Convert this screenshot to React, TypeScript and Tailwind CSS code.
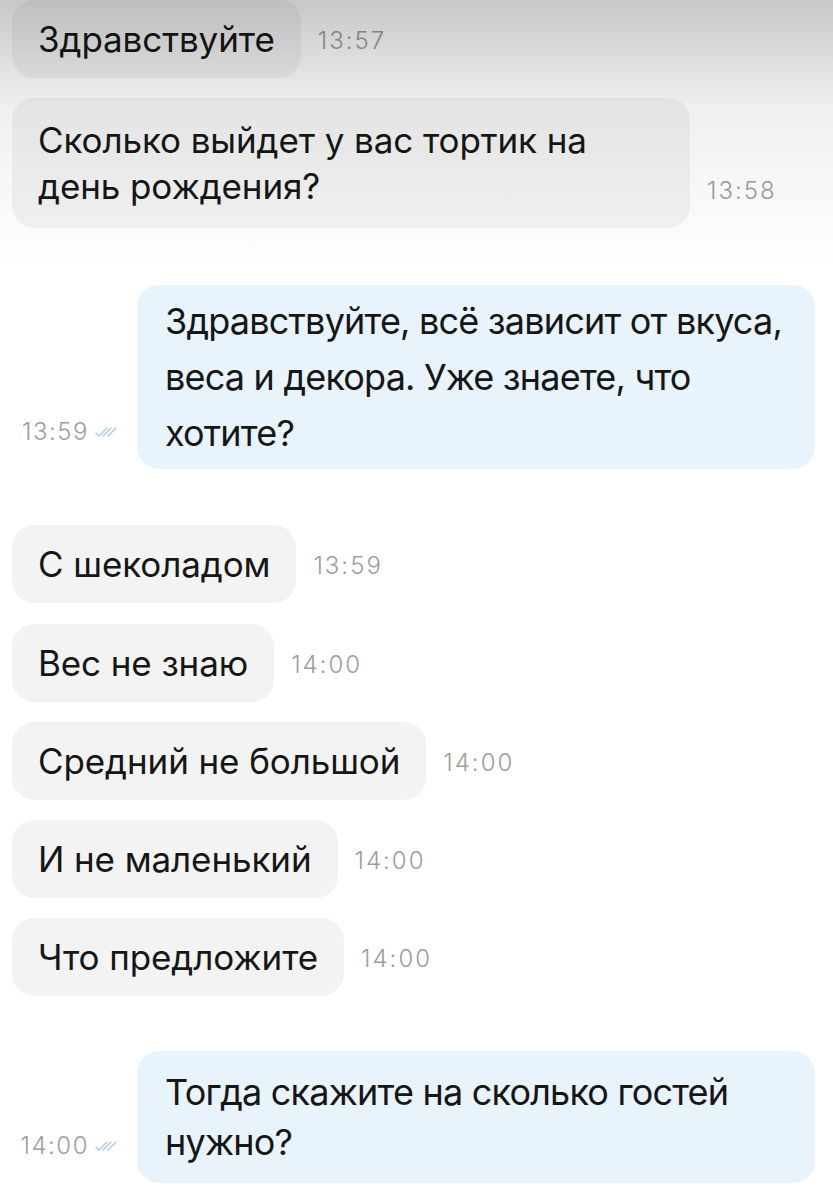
import React from 'react';

type Msg =
  | { side: 'in'; lines: string[]; time: string; mt: string }
  | { side: 'out'; lines: string[]; time: string; mt: string; leading: string; py: string };

const messages: Msg[] = [
  { side: 'in', lines: ['Здравствуйте'], time: '13:57', mt: 'mt-0' },
  { side: 'in', lines: ['Сколько выйдет у вас тортик на', 'день рождения?'], time: '13:58', mt: 'mt-[20px]' },
  {
    side: 'out',
    lines: ['Здравствуйте, всё зависит от вкуса,', 'веса и декора. Уже знаете, что', 'хотите?'],
    time: '13:59',
    mt: 'mt-[57px]',
    leading: 'leading-[56px]',
    py: 'py-[8px]',
  },
  { side: 'in', lines: ['С шеколадом'], time: '13:59', mt: 'mt-[56px]' },
  { side: 'in', lines: ['Вес не знаю'], time: '14:00', mt: 'mt-[21px]' },
  { side: 'in', lines: ['Средний не большой'], time: '14:00', mt: 'mt-[20px]' },
  { side: 'in', lines: ['И не маленький'], time: '14:00', mt: 'mt-[20px]' },
  { side: 'in', lines: ['Что предложите'], time: '14:00', mt: 'mt-[20px]' },
  {
    side: 'out',
    lines: ['Тогда скажите на сколько гостей', 'нужно?'],
    time: '14:00',
    mt: 'mt-[55px]',
    leading: 'leading-[50px]',
    py: 'py-[16px]',
  },
];

function DoubleCheck() {
  return (
    <svg width="22" height="12" viewBox="0 0 22 12" fill="none">
      <path d="M1 7 L4 10 L12 2" stroke="#a9cde3" strokeWidth="1.4" strokeLinecap="round" strokeLinejoin="round" />
      <path d="M8 10 L16 2" stroke="#a9cde3" strokeWidth="1.4" strokeLinecap="round" />
      <path d="M13 10 L21 2" stroke="#a9cde3" strokeWidth="1.4" strokeLinecap="round" />
    </svg>
  );
}

function Incoming({ lines, time, mt }: { lines: string[]; time: string; mt: string }) {
  const multi = lines.length > 1;
  return (
    <div className={`flex items-end gap-[17px] pl-[12px] ${mt}`}>
      <div
        className={`rounded-[22px] bg-[#f3f3f3] px-[26px] py-[19px] text-[35px] tracking-[-0.1px] text-[#161616] font-['Inter',sans-serif] ${
          multi ? 'w-[678px] leading-[46px]' : 'leading-[40px]'
        }`}
      >
        {lines.map((l, i) => (
          <div key={i} className="whitespace-nowrap">{l}</div>
        ))}
      </div>
      <span className="pb-[25px] text-[24px] leading-[24px] font-light tracking-[2px] text-[#9d9d9d] font-['Inter',sans-serif]">
        {time}
      </span>
    </div>
  );
}

function Outgoing({ lines, time, mt, leading, py }: { lines: string[]; time: string; mt: string; leading: string; py: string }) {
  return (
    <div className={`flex items-end justify-end gap-[20px] pr-[18px] ${mt}`}>
      <div className="flex items-center gap-[6px] pb-[25px]">
        <span className="text-[24px] leading-[24px] font-light tracking-[1.5px] text-[#9d9d9d] font-['Inter',sans-serif]">{time}</span>
        <DoubleCheck />
      </div>
      <div className={`w-[678px] rounded-[22px] bg-[#e8f3fc] px-[28px] ${py} text-[36px] tracking-[-0.8px] ${leading} text-[#161616] font-['Inter',sans-serif]`}>
        {lines.map((l, i) => (
          <div key={i} className="whitespace-nowrap">{l}</div>
        ))}
      </div>
    </div>
  );
}

export default function App() {
  return (
    <div className="relative w-[833px] h-[1200px] overflow-hidden bg-white">
      <div className="flex flex-col">
        {messages.map((m, i) =>
          m.side === 'in' ? (
            <Incoming key={i} lines={m.lines} time={m.time} mt={m.mt} />
          ) : (
            <Outgoing key={i} lines={m.lines} time={m.time} mt={m.mt} leading={m.leading} py={m.py} />
          )
        )}
      </div>
      {/* top shade of the screenshot */}
      <div className="pointer-events-none absolute inset-x-0 top-0 h-[270px] bg-gradient-to-b from-black/[0.22] via-black/[0.06] via-40% to-transparent" />
    </div>
  );
}
